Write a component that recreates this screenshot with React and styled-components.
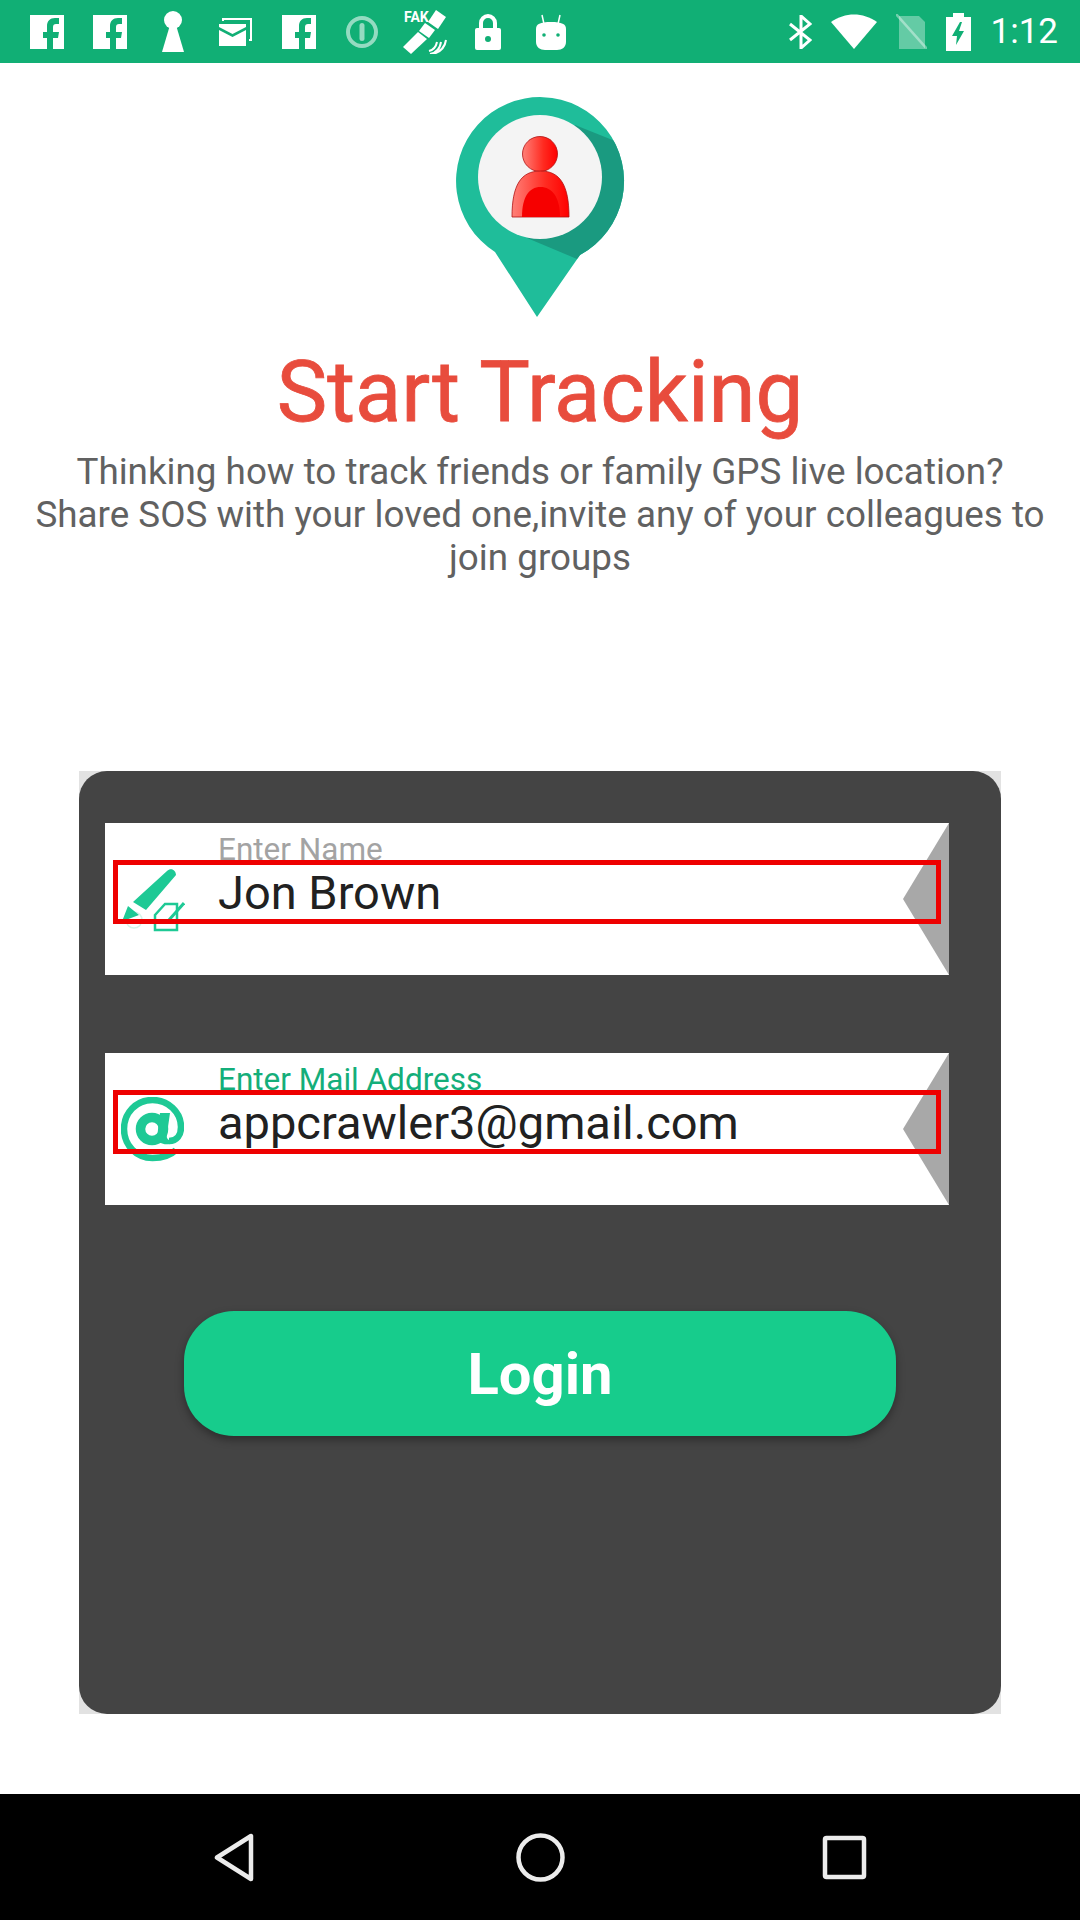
import React from "react";
import styled, { createGlobalStyle } from "styled-components";

const GlobalStyle = createGlobalStyle`
  html, body {
    margin: 0;
    padding: 0;
    background: #ffffff;
    font-family: Roboto, "Liberation Sans", sans-serif;
  }
`;

const Screen = styled.div`
  width: 1080px;
  height: 1920px;
  display: flex;
  flex-direction: column;
  overflow: hidden;
`;

const StatusBar = styled.div`
  height: 63px;
  flex: none;
  display: flex;
  align-items: center;
  justify-content: space-between;
  padding: 0 22px 0 15px;
  background: #11af75;
  box-sizing: border-box;
`;

const StatusLeft = styled.div`
  display: flex;
  align-items: center;
`;

const StatusSlot = styled.div`
  width: 63px;
  height: 63px;
  display: flex;
  align-items: center;
  justify-content: center;
`;

const StatusRight = styled.div`
  display: flex;
  align-items: center;
  gap: 19px;
`;

const Clock = styled.span`
  font-size: 35px;
  color: #ffffff;
  margin-left: 1px;
  line-height: 63px;
`;

const Main = styled.main`
  flex: 1;
  display: flex;
  flex-direction: column;
  align-items: center;
  background: #ffffff;
`;

const PinArt = styled.svg`
  display: block;
  width: 170px;
  height: 220px;
  margin-top: 34px;
`;

const Title = styled.h1`
  margin: 25px 0 0;
  font-size: 85px;
  line-height: 100px;
  font-weight: 400;
  color: #e84c3d;
  -webkit-text-stroke: 0.8px #e84c3d;
`;

const Intro = styled.p`
  margin: 8px 0 0;
  width: 1020px;
  font-size: 36.8px;
  line-height: 43px;
  text-align: center;
  color: #616161;
`;

const CardFrame = styled.div`
  width: 922px;
  height: 943px;
  margin-top: 192px;
  background: #e2e2e2;
`;

const Card = styled.section`
  height: 100%;
  box-sizing: border-box;
  padding-top: 52px;
  display: flex;
  flex-direction: column;
  border-radius: 28px;
  background: #444444;
`;

const Field = styled.div`
  position: relative;
  width: 844px;
  height: 152px;
  margin: 0 0 78px 26px;
  display: flex;
  background: #ffffff;
`;

const FieldIcon = styled.div`
  width: 113px;
  flex: none;
  box-sizing: border-box;
  padding: ${(props) => props.$top}px 0 0 ${(props) => props.$left}px;
`;

const FieldText = styled.div`
  flex: 1;
  display: flex;
  flex-direction: column;
  padding-top: 10px;
`;

const FieldLabel = styled.span`
  font-size: 31.5px;
  line-height: 34px;
  color: ${(props) => props.$color};
`;

const FieldValue = styled.span`
  font-size: 47px;
  line-height: 54px;
  margin-top: -1px;
  color: #212121;
`;

const FieldArrow = styled.div`
  width: 46px;
  flex: none;
  background: #a8a8a8;
  clip-path: polygon(100% 0, 0 50%, 100% 100%);
`;

const Highlight = styled.div`
  position: absolute;
  left: 8px;
  top: 37px;
  width: 828px;
  height: 64px;
  box-sizing: border-box;
  border: 5px solid #ee0000;
  pointer-events: none;
`;

const LoginButton = styled.button`
  align-self: center;
  width: 712px;
  height: 125px;
  margin-top: 28px;
  border: none;
  border-radius: 50px;
  background: #17cc8c;
  box-shadow: 0 4px 8px rgba(0, 0, 0, 0.35);
  color: #ffffff;
  font-family: Roboto, "Liberation Sans", sans-serif;
  font-size: 58px;
  font-weight: 700;
`;

const NavBar = styled.nav`
  height: 126px;
  flex: none;
  display: flex;
  align-items: center;
  justify-content: center;
  gap: 255px;
  background: #000000;
`;

const NavIcon = styled.svg`
  display: block;
  width: 49px;
  height: 49px;
  fill: none;
  stroke: #ececec;
  stroke-width: 4.5;
  stroke-linejoin: round;
`;

const green = "#11af75";

const FacebookIcon = () => (
  <svg width="34" height="34" viewBox="0 0 34 34">
    <rect width="34" height="34" fill="#fff" />
    <path
      fill={green}
      d="M17 34V23h-4v-6h4v-6c0-5 3-8 8-8h4v6h-3c-2 0-3 1-3 3v5h6l-1 6h-5v11z"
    />
  </svg>
);

const KeyholeIcon = () => (
  <svg width="22" height="41" viewBox="0 0 22 41">
    <circle cx="11" cy="9" r="9" fill="#fff" />
    <path fill="#fff" d="M8 14h6l8 27H0z" />
  </svg>
);

const MailIcon = () => (
  <svg width="33" height="28" viewBox="0 0 33 28">
    <path fill="none" stroke="#fff" strokeWidth="2" d="M4 3V1h28v21h-2" />
    <path fill="#fff" d="M0 6h27v3L13.5 16 0 9z" />
    <path fill="#fff" d="M0 12l13.5 7L27 12v16H0z" />
  </svg>
);

const InfoIcon = () => (
  <svg width="32" height="32" viewBox="0 0 32 32" opacity="0.55">
    <circle cx="16" cy="16" r="14" fill="none" stroke="#fff" strokeWidth="4" />
    <rect x="13.5" y="7" width="5" height="18" rx="2.5" fill="#fff" />
  </svg>
);

const FakeGpsIcon = () => (
  <svg width="44" height="44" viewBox="0 0 44 44">
    <text x="1" y="12" fontFamily="Roboto, sans-serif" fontWeight="700" fontSize="14" fill="#fff">
      FAK
    </text>
    <path fill="#fff" d="M33 0l10 7-8 12-10-7z" />
    <path fill="#fff" d="M22 13l10 7-6 8-10-7z" />
    <path fill="#fff" d="M15 22l9 7L8 44 0 37z" />
    <g fill="none" stroke="#fff" strokeWidth="2">
      <path d="M26 41c4-1 7-4 8-9" />
      <path d="M27 44c6-1 10-5 11-12" />
      <path d="M30 44c7-2 12-7 13-14" />
    </g>
  </svg>
);

const LockIcon = () => (
  <svg width="26" height="36" viewBox="0 0 26 36">
    <path fill="none" stroke="#fff" strokeWidth="4" d="M6 16V9a7 7 0 0 1 14 0v7" />
    <rect y="14" width="26" height="22" rx="2" fill="#fff" />
    <circle cx="13" cy="25" r="3" fill={green} />
  </svg>
);

const AndroidIcon = () => (
  <svg width="30" height="36" viewBox="0 0 30 36">
    <path fill="none" stroke="#fff" strokeWidth="1.5" d="M6 1l2 9M24 1l-2 9" />
    <path fill="#fff" d="M0 15c0-5 4-7 15-7s15 2 15 7v13c0 5-4 8-9 8H9c-5 0-9-3-9-8z" />
    <circle cx="8" cy="21" r="1.8" fill={green} />
    <circle cx="22" cy="21" r="1.8" fill={green} />
  </svg>
);

const BluetoothIcon = () => (
  <svg width="23" height="34" viewBox="0 0 23 34">
    <path fill="none" stroke="#fff" strokeWidth="3" d="M1 9l20 16-9 8V1l9 8L1 25" />
  </svg>
);

const WifiIcon = () => (
  <svg width="46" height="35" viewBox="0 0 46 35">
    <path fill="#fff" d="M23 35L0 8C14-2 32-2 46 8z" />
  </svg>
);

const NoSimIcon = () => (
  <svg width="31" height="35" viewBox="0 0 31 35">
    <path fill="#fff" opacity="0.35" d="M3 2h20l6 6v27H3z" />
    <path fill="none" stroke="#fff" strokeOpacity="0.4" strokeWidth="2.5" d="M0 0l31 35" />
  </svg>
);

const BatteryIcon = () => (
  <svg width="25" height="38" viewBox="0 0 25 38">
    <path fill="#fff" d="M7 0h11v4h7v34H0V4h7z" />
    <path fill={green} d="M14 9L6 23h5l-1 9 8-14h-5l3-9z" />
  </svg>
);

const BackIcon = () => (
  <NavIcon viewBox="0 0 49 49">
    <path d="M39 3v43L5 24.500z" />
  </NavIcon>
);

const HomeIcon = () => (
  <NavIcon viewBox="0 0 49 49">
    <circle cx="24.500" cy="24.500" r="22" />
  </NavIcon>
);

const RecentsIcon = () => (
  <NavIcon viewBox="0 0 49 49">
    <rect x="5" y="5" width="39" height="39" rx="1.500" />
  </NavIcon>
);

const pinOutline = "M82 220L40 155A84 84 0 1 1 125 158z";

const LocationPin = () => (
  <PinArt viewBox="0 0 170 220">
    <defs>
      <clipPath id="pinShape">
        <path d={pinOutline} />
      </clipPath>
      <linearGradient id="gloss" x1="0" x2="1" y1="0" y2="0">
        <stop offset="0" stopColor="#ff8078" />
        <stop offset="0.6" stopColor="#ff2a20" />
        <stop offset="1" stopColor="#ff0000" />
      </linearGradient>
    </defs>
    <path fill="#1fbd9a" d={pinOutline} />
    <polygon
      clipPath="url(#pinShape)"
      fill="#1a9a80"
      points="120,28 175,50 175,120 122,162 72,141"
    />
    <circle cx="85" cy="80" r="62" fill="#f4f4f4" />
    <circle cx="85" cy="57" r="17.500" fill="url(#gloss)" stroke="#b01010" strokeWidth="0.8" />
    <path
      fill="url(#gloss)"
      stroke="#b01010"
      strokeWidth="0.8"
      d="M57 120C57 88 66 74 85.500 74S114 88 114 120z"
    />
    <path fill="#f60000" d="M67 120C67 100 74 90 85.500 90S105 100 105 120z" />
  </PinArt>
);

const PenIcon = () => (
  <svg width="66" height="70" viewBox="0 0 66 70">
    <circle cx="15" cy="55" r="8" fill="none" stroke="#d5f3e8" strokeWidth="1.500" />
    <path fill="#1ec995" d="M14 37L48 6c4-4 9-1 9 4L27 45z" />
    <path fill="#1ec995" d="M9 41l11 9-16 6-2 3z" />
    <path fill="#ffffff" stroke="#1ec995" strokeWidth="2.500" d="M36 50l10-11h12v26H36z" />
    <path fill="none" stroke="#1ec995" strokeWidth="3" d="M50 55l15-17" />
  </svg>
);

const AtIcon = () => (
  <svg width="63" height="65" viewBox="0 0 63 65">
    <path
      fill="none"
      stroke="#1ec995"
      strokeWidth="6.500"
      d="M55 53c-5 5-14 8-23.500 8C15 61 3 48 3 32 3 16 15 3 31.500 3 47 3 60 15 60 30c0 8-4 14-12 14"
    />
    <circle cx="31" cy="32" r="11.500" fill="none" stroke="#1ec995" strokeWidth="9.500" />
    <path fill="#1ec995" d="M39 16h10l-3 21c-1 4 1 6 3 6v4c-7 1-12-1-13-6z" />
  </svg>
);

export default function App() {
  return (
    <Screen>
      <GlobalStyle />
      <StatusBar>
        <StatusLeft>
          <StatusSlot><FacebookIcon /></StatusSlot>
          <StatusSlot><FacebookIcon /></StatusSlot>
          <StatusSlot><KeyholeIcon /></StatusSlot>
          <StatusSlot><MailIcon /></StatusSlot>
          <StatusSlot><FacebookIcon /></StatusSlot>
          <StatusSlot><InfoIcon /></StatusSlot>
          <StatusSlot><FakeGpsIcon /></StatusSlot>
          <StatusSlot><LockIcon /></StatusSlot>
          <StatusSlot><AndroidIcon /></StatusSlot>
        </StatusLeft>
        <StatusRight>
          <BluetoothIcon />
          <WifiIcon />
          <NoSimIcon />
          <BatteryIcon />
          <Clock>1:12</Clock>
        </StatusRight>
      </StatusBar>

      <Main>
        <LocationPin />
        <Title>Start Tracking</Title>
        <Intro>
          Thinking how to track friends or family GPS live location? Share SOS with your loved
          one,invite any of your colleagues to join groups
        </Intro>

        <CardFrame>
          <Card>
            <Field>
              <FieldIcon $top={42} $left={14}>
                <PenIcon />
              </FieldIcon>
              <FieldText>
                <FieldLabel $color="#a3a3a3">Enter Name</FieldLabel>
                <FieldValue>Jon Brown</FieldValue>
              </FieldText>
              <FieldArrow />
              <Highlight />
            </Field>
            <Field>
              <FieldIcon $top={44} $left={16}>
                <AtIcon />
              </FieldIcon>
              <FieldText>
                <FieldLabel $color="#14ae7a">Enter Mail Address</FieldLabel>
                <FieldValue>appcrawler3@gmail.com</FieldValue>
              </FieldText>
              <FieldArrow />
              <Highlight />
            </Field>
            <LoginButton>Login</LoginButton>
          </Card>
        </CardFrame>
      </Main>

      <NavBar>
        <BackIcon />
        <HomeIcon />
        <RecentsIcon />
      </NavBar>
    </Screen>
  );
}
